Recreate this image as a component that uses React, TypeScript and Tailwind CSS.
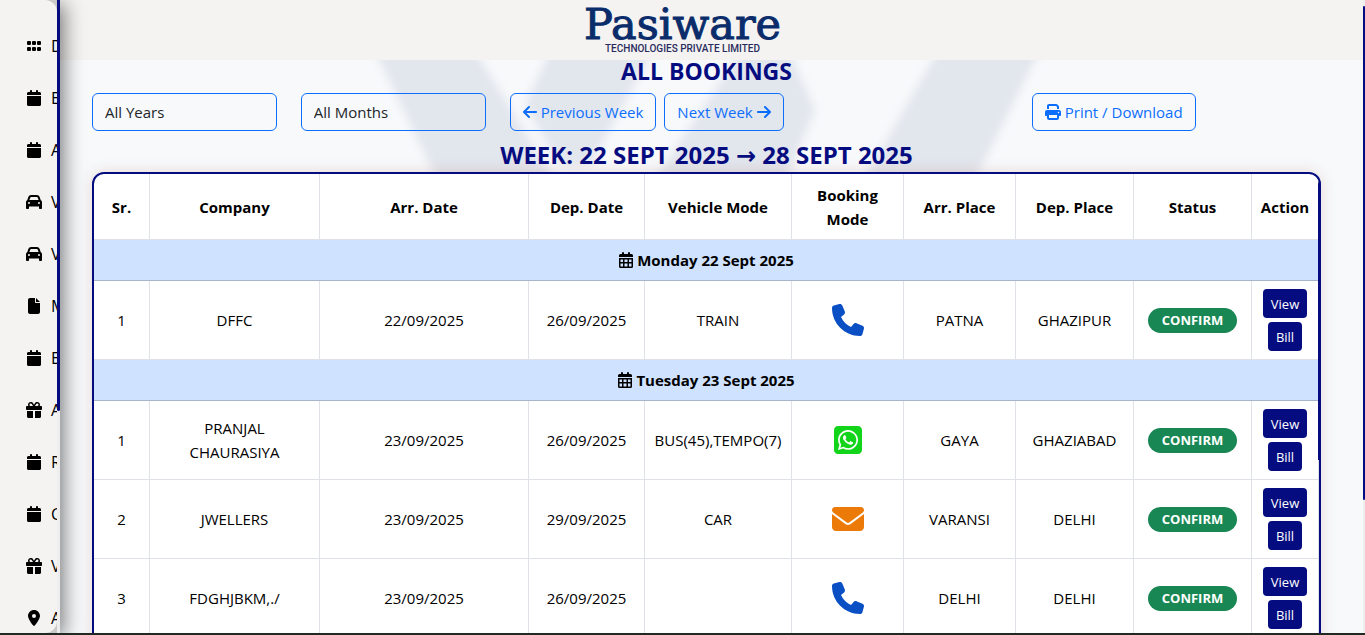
import React, { useState } from 'react';
import {
    FaArrowLeft,
    FaArrowRight,
    FaCalendar,
    FaCar,
    FaEnvelope,
    FaFile,
    FaGift,
    FaGrip,
    FaLocationDot,
    FaPhone,
    FaPrint,
    FaSquareWhatsapp,
} from 'react-icons/fa6';

type Booking = {
    company: string;
    arrDate: string;
    depDate: string;
    vehicle: string;
    mode: 'phone' | 'whatsapp' | 'mail';
    arrPlace: string;
    depPlace: string;
};

const menu = [
    { icon: FaGrip, label: 'D' },
    { icon: FaCalendar, label: 'B' },
    { icon: FaCalendar, label: 'A' },
    { icon: FaCar, label: 'V' },
    { icon: FaCar, label: 'V' },
    { icon: FaFile, label: 'M' },
    { icon: FaCalendar, label: 'B' },
    { icon: FaGift, label: 'A' },
    { icon: FaCalendar, label: 'R' },
    { icon: FaCalendar, label: 'C' },
    { icon: FaGift, label: 'V' },
    { icon: FaLocationDot, label: 'A' },
];

const days: { title: string; bookings: Booking[] }[] = [
    {
        title: 'Monday 22 Sept 2025',
        bookings: [
            { company: 'DFFC', arrDate: '22/09/2025', depDate: '26/09/2025', vehicle: 'TRAIN', mode: 'phone', arrPlace: 'PATNA', depPlace: 'GHAZIPUR' },
        ],
    },
    {
        title: 'Tuesday 23 Sept 2025',
        bookings: [
            { company: 'PRANJAL CHAURASIYA', arrDate: '23/09/2025', depDate: '26/09/2025', vehicle: 'BUS(45),TEMPO(7)', mode: 'whatsapp', arrPlace: 'GAYA', depPlace: 'GHAZIABAD' },
            { company: 'JWELLERS', arrDate: '23/09/2025', depDate: '29/09/2025', vehicle: 'CAR', mode: 'mail', arrPlace: 'VARANSI', depPlace: 'DELHI' },
            { company: 'FDGHJBKM,./', arrDate: '23/09/2025', depDate: '26/09/2025', vehicle: '', mode: 'phone', arrPlace: 'DELHI', depPlace: 'DELHI' },
        ],
    },
];

const columns = [
    { name: 'Sr.', width: 'w-[56px]' },
    { name: 'Company', width: 'w-[170px]' },
    { name: 'Arr. Date', width: 'w-[209px]' },
    { name: 'Dep. Date', width: 'w-[116px]' },
    { name: 'Vehicle Mode', width: 'w-[147px]' },
    { name: 'Booking Mode', width: 'w-[112px]' },
    { name: 'Arr. Place', width: 'w-[112px]' },
    { name: 'Dep. Place', width: 'w-[118px]' },
    { name: 'Status', width: 'w-[118px]' },
    { name: 'Action', width: 'w-[67px]' },
];

const cell = 'border-b border-r border-[#dee2e6] px-2 py-2';
const outline = 'h-[38px] rounded-md border border-[#0d6efd]';
const outlineButton = `${outline} inline-flex items-center gap-1 px-3 whitespace-nowrap text-[#0d6efd]`;
const actionButton = 'h-[29px] rounded bg-[#050c80] px-2 text-[13px] text-white';

const ModeIcon: React.FC<{ mode: Booking['mode'] }> = ({ mode }) => {
    if (mode === 'whatsapp') return <FaSquareWhatsapp className="mx-auto size-8 text-[#12d41a]" />;
    if (mode === 'mail') return <FaEnvelope className="mx-auto size-8 text-[#ec7a08]" />;
    return <FaPhone className="mx-auto size-8 text-[#0a4fc4]" />;
};

// Calendar with a 3 x 2 grid of days
const CalendarGrid: React.FC = () => (
    <svg className="h-4 w-[14px]" viewBox="0 0 14 16" fill="currentColor" aria-hidden="true">
        <rect x="3" y="0" width="2" height="4" rx="1" />
        <rect x="9" y="0" width="2" height="4" rx="1" />
        <path d="M1.5 2h11A1.5 1.5 0 0 1 14 3.500V5H0V3.500A1.500 1.500 0 0 1 1.500 2Z" />
        <path
            fillRule="evenodd"
            d="M0 6h14v8.500a1.500 1.500 0 0 1-1.500 1.500h-11A1.500 1.500 0 0 1 0 14.500ZM1.500 7.500v2.500H4V7.500ZM5.500 7.500v2.500h3V7.500ZM10 7.500v2.500h2.500V7.500ZM1.500 11.500v3H4v-3ZM5.500 11.500v3h3v-3ZM10 11.500v3h2.500v-3Z"
        />
    </svg>
);

// Soft diagonal bands behind the page content
const Watermark: React.FC = () => (
    <svg className="absolute inset-x-0 top-0 h-[575px] w-full" viewBox="60 60 1303 575" preserveAspectRatio="none" aria-hidden="true">
        <defs>
            <filter id="soft" x="-10%" y="-10%" width="120%" height="120%">
                <feGaussianBlur stdDeviation="5" />
            </filter>
        </defs>
        <g fill="#e2e6ed" filter="url(#soft)">
            <path d="M365 30 L462 30 L555 180 L600 290 L490 290 Z" />
            <path d="M560 30 L665 30 L590 165 L560 165 L525 105 Z" />
            <path d="M780 30 L815 110 L740 290 L580 290 L735 60 Z" />
            <path d="M950 30 L1050 30 L920 290 L800 290 Z" />
        </g>
    </svg>
);

const Sidebar: React.FC = () => (
    <aside className="relative z-10 flex w-[60px] shrink-0 bg-[#c9c9c9] shadow-[4px_4px_20px_rgba(0,0,0,0.5)]">
        <nav className="flex-1 overflow-hidden rounded-r-xl bg-[#f4f3f1] pt-5 pl-[26px] text-base">
            {menu.map((item, index) => (
                <a key={index} href="#" className="flex h-[52px] items-center gap-[9px] font-medium text-black">
                    <item.icon className="size-4 shrink-0" />
                    <span>{item.label}</span>
                </a>
            ))}
        </nav>
        <div className="w-[3px] bg-[#eeeeee]">
            <div className="h-[65%] rounded-b bg-[#050c80]" />
        </div>
    </aside>
);

const App: React.FC = () => {
    const [year, setYear] = useState('');
    const [month, setMonth] = useState('');

    return (
        <div className="flex h-screen overflow-hidden border-b-2 border-[#1f2a22] bg-[#f7f9fb] font-['Open_Sans','Noto_Sans',sans-serif] text-[15px] leading-6 text-black">
            <Sidebar />

            <div className="flex min-w-0 flex-1 flex-col">
                <header className="flex h-[60px] shrink-0 flex-col items-center bg-[#f4f3f1] pt-1 pr-[58px] text-[#0a2c6b]">
                    <span className="font-['DejaVu_Serif',serif] text-[43px] leading-10 [-webkit-text-stroke:1px_#0a2c6b]">Pasiware</span>
                    <span className="font-['Roboto',sans-serif] text-[10px] leading-[10px] font-medium text-[#2b2c5e]">TECHNOLOGIES PRIVATE LIMITED</span>
                </header>

                <main className="relative min-h-0 flex-1 overflow-hidden pr-[42px] pl-8">
                    <Watermark />
                    <div className="relative">
                        <h2 className="pb-[11px] text-center text-[23px] leading-[22px] font-bold text-[#050c80]">ALL BOOKINGS</h2>

                        <div className="grid grid-cols-12 gap-x-6">
                            <select
                                aria-label="Year"
                                value={year}
                                onChange={(e) => setYear(e.target.value)}
                                className={`${outline} col-span-2 appearance-none px-3 text-[#212529]`}
                            >
                                <option value="">All Years</option>
                            </select>
                            <select
                                aria-label="Month"
                                value={month}
                                onChange={(e) => setMonth(e.target.value)}
                                className={`${outline} col-span-2 appearance-none px-3 text-[#212529]`}
                            >
                                <option value="">All Months</option>
                            </select>
                            <div className="col-span-5 flex gap-2">
                                <button className={outlineButton}>
                                    <FaArrowLeft className="h-4 w-[14px]" /> Previous Week
                                </button>
                                <button className={outlineButton}>
                                    Next Week <FaArrowRight className="h-4 w-[14px]" />
                                </button>
                            </div>
                            <div className="col-span-3">
                                <button className={outlineButton}>
                                    <FaPrint className="size-4" /> Print / Download
                                </button>
                            </div>
                        </div>

                        <h2 className="pt-[10px] pb-[3px] text-center text-[24px] leading-7 font-bold text-[#050c80]">
                            WEEK: 22 SEPT 2025 <span className="font-['DejaVu_Sans',sans-serif] leading-none">→</span> 28 SEPT 2025
                        </h2>

                        <div className="relative overflow-hidden rounded-xl border-2 border-[#050c80] bg-white pb-10 shadow-[0_0_15px_rgba(160,40,20,0.15)]">
                            <table className="w-full table-fixed border-separate border-spacing-0 text-center">
                                <thead>
                                    <tr className="h-[66px]">
                                        {columns.map((col) => (
                                            <th key={col.name} className={`${col.width} border-r border-b border-[#dee2e6] px-1 font-bold`}>
                                                {col.name}
                                            </th>
                                        ))}
                                    </tr>
                                </thead>
                                <tbody>
                                    {days.map((day) => (
                                        <React.Fragment key={day.title}>
                                            <tr>
                                                <td colSpan={10} className="border-b border-[#a6b5cc] bg-[#cfe2ff] py-2 font-bold">
                                                    <span className="flex items-center justify-center gap-1">
                                                        <CalendarGrid /> {day.title}
                                                    </span>
                                                </td>
                                            </tr>
                                            {day.bookings.map((item, index) => (
                                                <tr key={index} className="h-[79px]">
                                                    <td className={cell}>{index + 1}</td>
                                                    <td className={cell}>{item.company}</td>
                                                    <td className={cell}>{item.arrDate}</td>
                                                    <td className={cell}>{item.depDate}</td>
                                                    <td className={cell}>{item.vehicle}</td>
                                                    <td className={cell}><ModeIcon mode={item.mode} /></td>
                                                    <td className={cell}>{item.arrPlace}</td>
                                                    <td className={cell}>{item.depPlace}</td>
                                                    <td className={cell}>
                                                        <span className="inline-flex h-[25px] items-center rounded-full bg-[#198754] px-[14px] text-[13px] font-bold text-white">
                                                            CONFIRM
                                                        </span>
                                                    </td>
                                                    <td className={cell}>
                                                        <div className="flex flex-col items-center gap-1">
                                                            <button className={actionButton}>View</button>
                                                            <button className={actionButton}>Bill</button>
                                                        </div>
                                                    </td>
                                                </tr>
                                            ))}
                                        </React.Fragment>
                                    ))}
                                </tbody>
                            </table>
                            <div className="absolute top-0 right-0 h-[286px] w-px bg-[#050c80]" />
                        </div>
                    </div>
                </main>
            </div>

            {/* Page scrollbar */}
            <div className="w-[2px] shrink-0 bg-[#eeeeee] pt-[6px]">
                <div className="h-[494px] rounded bg-[#050c80]" />
            </div>
        </div>
    );
};

export default App;
